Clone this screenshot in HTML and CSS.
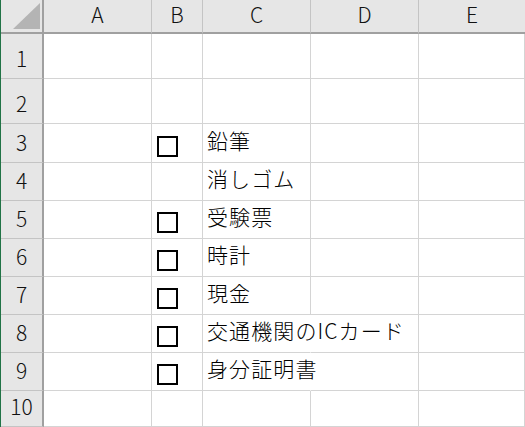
FILE: index.html
```html
<!DOCTYPE html>
<html lang="ja">
<head>
<meta charset="utf-8">
<link rel="stylesheet" href="styles.css">
</head>
<body>
<div class="sheet">
  <div class="corner"><svg class="tri" width="42" height="32" viewBox="0 0 42 32"><polygon points="12,29 39,29 39,3" fill="#b4b4b4"/></svg></div>
  <div class="ch">A</div><div class="ch">B</div><div class="ch">C</div><div class="ch">D</div><div class="ch last">E</div>

  <div class="rh">1</div><div class="c"></div><div class="c"></div><div class="c"></div><div class="c"></div><div class="c"></div>
  <div class="rh">2</div><div class="c"></div><div class="c"></div><div class="c"></div><div class="c"></div><div class="c"></div>
  <div class="rh">3</div><div class="c"></div><div class="c cb"><span class="box"></span></div><div class="c t">鉛筆</div><div class="c"></div><div class="c"></div>
  <div class="rh">4</div><div class="c"></div><div class="c"></div><div class="c t">消しゴム</div><div class="c"></div><div class="c"></div>
  <div class="rh">5</div><div class="c"></div><div class="c cb"><span class="box"></span></div><div class="c t">受験票</div><div class="c"></div><div class="c"></div>
  <div class="rh">6</div><div class="c"></div><div class="c cb"><span class="box"></span></div><div class="c t">時計</div><div class="c"></div><div class="c"></div>
  <div class="rh">7</div><div class="c"></div><div class="c cb"><span class="box"></span></div><div class="c t">現金</div><div class="c"></div><div class="c"></div>
  <div class="rh">8</div><div class="c"></div><div class="c cb"><span class="box"></span></div><div class="c t over">交通機関のICカード</div><div class="c"></div><div class="c"></div>
  <div class="rh">9</div><div class="c"></div><div class="c cb"><span class="box"></span></div><div class="c t over">身分証明書</div><div class="c"></div><div class="c"></div>
  <div class="rh">10</div><div class="c"></div><div class="c"></div><div class="c"></div><div class="c"></div><div class="c"></div>
</div>
</body>
</html>
```

FILE: styles.css
```css
html, body {
  margin: 0;
  padding: 0;
  background: #ffffff;
  overflow: hidden;
}
.sheet {
  width: 525px;
  height: 427px;
  box-sizing: border-box;
  border-left: 1px solid #217346;
  display: grid;
  grid-template-columns: 43px 108px 51px 108px 108px 1fr;
  grid-template-rows: 34px 45px 45px 39px 38px 38px 38px 38px 38px 38px 1fr;
  font-family: "Noto Sans CJK JP", "Noto Sans", sans-serif;
  font-weight: 300;
  color: #000;
  overflow: hidden;
}
.sheet > div {
  box-sizing: border-box;
  min-width: 0;
}
.corner {
  background: #e6e6e6;
  border-right: 2px solid #a0a0a0;
  border-bottom: 2px solid #a0a0a0;
}
.tri {
  display: block;
}
.ch {
  background: #e6e6e6;
  border-right: 1px solid #c4c4c4;
  border-bottom: 2px solid #a0a0a0;
  display: flex;
  justify-content: center;
  align-items: flex-end;
  font-size: 21px;
  line-height: 25px;
  padding-bottom: 5px;
  color: #111;
}
.ch.last {
  border-right: none;
}
.rh {
  background: #e6e6e6;
  border-right: 2px solid #a0a0a0;
  border-bottom: 1px solid #c4c4c4;
  display: flex;
  justify-content: center;
  align-items: flex-end;
  font-size: 21px;
  line-height: 25px;
  padding-bottom: 7px;
  color: #111;
}
.c {
  border-right: 1px solid #d4d4d4;
  border-bottom: 1px solid #d4d4d4;
}
.cb {
  display: flex;
  align-items: flex-end;
  padding-left: 5px;
  padding-bottom: 5px;
}
.box {
  display: block;
  width: 21px;
  height: 21px;
  box-sizing: border-box;
  border: 2px solid #000;
}
.t {
  display: flex;
  align-items: flex-end;
  padding-left: 4px;
  padding-bottom: 8px;
  font-size: 21px;
  line-height: 28px;
  letter-spacing: 1.1px;
  white-space: nowrap;
  overflow: visible;
  position: relative;
  z-index: 1;
}
.t.over {
  border-right-color: transparent;
}
```
